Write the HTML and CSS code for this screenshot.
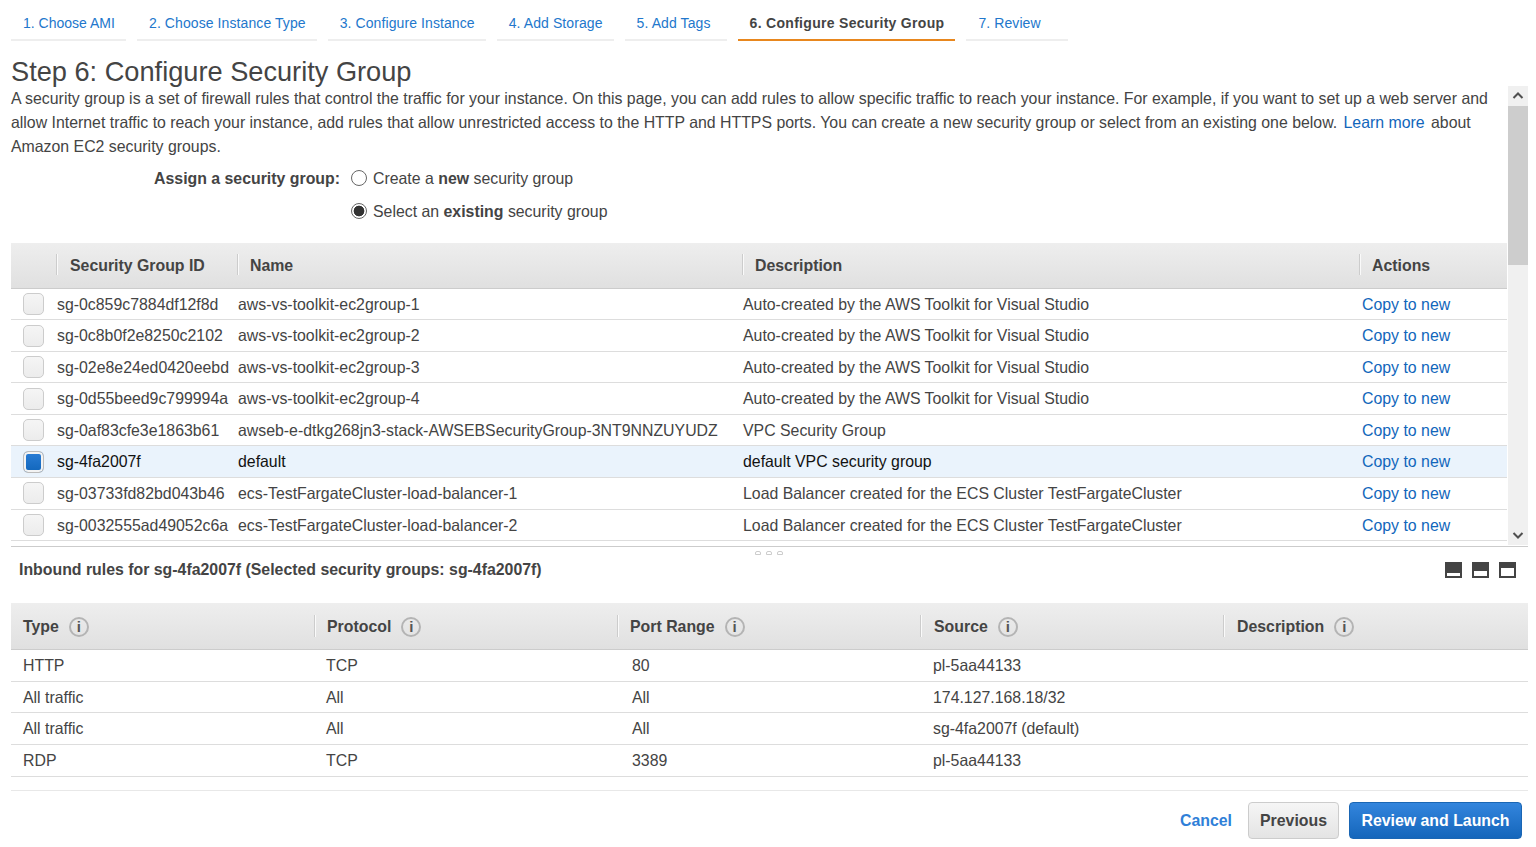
FILE: index.html
```html
<!DOCTYPE html>
<html lang="en">
<head>
<meta charset="utf-8">
<title>Step 6: Configure Security Group</title>
<link rel="stylesheet" href="styles.css">
</head>
<body>
<nav class="steps">
  <a class="step">1. Choose AMI</a>
  <a class="step">2. Choose Instance Type</a>
  <a class="step">3. Configure Instance</a>
  <a class="step">4. Add Storage</a>
  <a class="step">5. Add Tags</a>
  <a class="step active">6. Configure Security Group</a>
  <a class="step">7. Review</a>
</nav>
<h1 class="title">Step 6: Configure Security Group</h1>
<section class="pane">
  <div class="pane-content">
    <p class="intro">A security group is a set of firewall rules that control the traffic for your instance. On this page, you can add rules to allow specific traffic to reach your instance. For example, if you want to set up a web server and allow Internet traffic to reach your instance, add rules that allow unrestricted access to the HTTP and HTTPS ports. You can create a new security group or select from an existing one below. <a class="link learn">Learn more</a> about Amazon EC2 security groups.</p>
    <div class="assign">
      <div class="assign-label">Assign a security group:</div>
      <div class="assign-options">
        <label class="option"><span class="radio"></span><span>Create a <b>new</b> security group</span></label>
        <label class="option"><span class="radio on"></span><span>Select an <b>existing</b> security group</span></label>
      </div>
    </div>
    <div class="sg-table">
      <div class="sg-row sg-head">
        <div class="hcell"></div><div class="hcell sep">Security Group ID</div><div class="hcell sep">Name</div><div class="hcell sep">Description</div><div class="hcell sep">Actions</div>
      </div>
      <div class="sg-row"><div class="check-cell"><span class="check"></span></div><div>sg-0c859c7884df12f8d</div><div>aws-vs-toolkit-ec2group-1</div><div>Auto-created by the AWS Toolkit for Visual Studio</div><div><a class="link copy">Copy to new</a></div></div>
      <div class="sg-row"><div class="check-cell"><span class="check"></span></div><div>sg-0c8b0f2e8250c2102</div><div>aws-vs-toolkit-ec2group-2</div><div>Auto-created by the AWS Toolkit for Visual Studio</div><div><a class="link copy">Copy to new</a></div></div>
      <div class="sg-row"><div class="check-cell"><span class="check"></span></div><div>sg-02e8e24ed0420eebd</div><div>aws-vs-toolkit-ec2group-3</div><div>Auto-created by the AWS Toolkit for Visual Studio</div><div><a class="link copy">Copy to new</a></div></div>
      <div class="sg-row"><div class="check-cell"><span class="check"></span></div><div>sg-0d55beed9c799994a</div><div>aws-vs-toolkit-ec2group-4</div><div>Auto-created by the AWS Toolkit for Visual Studio</div><div><a class="link copy">Copy to new</a></div></div>
      <div class="sg-row"><div class="check-cell"><span class="check"></span></div><div>sg-0af83cfe3e1863b61</div><div>awseb-e-dtkg268jn3-stack-AWSEBSecurityGroup-3NT9NNZUYUDZ</div><div>VPC Security Group</div><div><a class="link copy">Copy to new</a></div></div>
      <div class="sg-row selected"><div class="check-cell"><span class="check on"></span></div><div>sg-4fa2007f</div><div>default</div><div>default VPC security group</div><div><a class="link copy">Copy to new</a></div></div>
      <div class="sg-row"><div class="check-cell"><span class="check"></span></div><div>sg-03733fd82bd043b46</div><div>ecs-TestFargateCluster-load-balancer-1</div><div>Load Balancer created for the ECS Cluster TestFargateCluster</div><div><a class="link copy">Copy to new</a></div></div>
      <div class="sg-row"><div class="check-cell"><span class="check"></span></div><div>sg-0032555ad49052c6a</div><div>ecs-TestFargateCluster-load-balancer-2</div><div>Load Balancer created for the ECS Cluster TestFargateCluster</div><div><a class="link copy">Copy to new</a></div></div>
    </div>
  </div>
  <div class="scrollbar">
    <svg class="arrow" width="20" height="20" viewBox="0 0 20 20"><path d="M5.5 12 10 7.5 14.5 12" fill="none" stroke="#505050" stroke-width="2"/></svg>
    <div class="thumb"></div>
    <div class="track"></div>
    <svg class="arrow" width="20" height="20" viewBox="0 0 20 20"><path d="M5.5 8 10 12.5 14.5 8" fill="none" stroke="#505050" stroke-width="2"/></svg>
  </div>
</section>
<section class="detail">
  <div class="grip"><i></i><i></i><i></i></div>
  <div class="detail-head">
    <div class="detail-title">Inbound rules for sg-4fa2007f (Selected security groups: sg-4fa2007f)</div>
    <div class="sizers">
      <span class="sizer s1"></span><span class="sizer s2"></span><span class="sizer s3"></span>
    </div>
  </div>
  <div class="rules">
    <div class="r-row r-head">
      <div class="rhcell first">Type <span class="info">i</span></div>
      <div class="rhcell">Protocol <span class="info">i</span></div>
      <div class="rhcell">Port Range <span class="info">i</span></div>
      <div class="rhcell wide">Source <span class="info">i</span></div>
      <div class="rhcell wide">Description <span class="info">i</span></div>
    </div>
    <div class="r-row"><div>HTTP</div><div>TCP</div><div class="port">80</div><div>pl-5aa44133</div><div></div></div>
    <div class="r-row"><div>All traffic</div><div>All</div><div class="port">All</div><div>174.127.168.18/32</div><div></div></div>
    <div class="r-row"><div>All traffic</div><div>All</div><div class="port">All</div><div>sg-4fa2007f (default)</div><div></div></div>
    <div class="r-row"><div>RDP</div><div>TCP</div><div class="port">3389</div><div>pl-5aa44133</div><div></div></div>
  </div>
</section>
<footer class="footer">
  <a class="cancel">Cancel</a>
  <button class="btn prev">Previous</button>
  <button class="btn primary">Review and Launch</button>
</footer>
</body>
</html>
```
FILE: styles.css
```css
* { box-sizing: border-box; }
html, body { margin: 0; height: 100%; overflow: hidden; background: #fff; }
body { padding-left: 11px; width: 1536px; height: 847px; font: 15.86px/24px "Liberation Sans", Arial, sans-serif; color: #444; }
a { text-decoration: none; }
.link { color: #1166bb; }

.steps { display: flex; gap: 11px; height: 41px; }
.step { padding: 0 11px 0 12px; min-width: 102px; height: 41px; line-height: 46px; font-size: 14px; letter-spacing: .09px; color: #2277cc; border-bottom: 2px solid #eeeeee; white-space: nowrap; }
.step:first-child { width: 115px; letter-spacing: 0; }
.step.active { color: #444; font-weight: bold; letter-spacing: .3px; border-bottom-color: #e8871e; }

.title { margin: 16px 0 0; height: 29px; font-size: 27.2px; line-height: 30px; font-weight: normal; color: #444; }

.pane { display: flex; height: 460px; }
.pane-content { width: 1497px; }
.intro { margin: 0; height: 72px; width: 1490px; padding-top: 1px; }
.learn { margin: 0 2px; }
.assign { display: flex; height: 85px; }
.assign-label { width: 329px; padding-top: 9px; text-align: right; font-weight: bold; }
.assign-options { padding-left: 11px; padding-top: 9px; }
.option { display: flex; align-items: center; gap: 6px; height: 24px; margin-bottom: 9px; }
.radio { width: 16px; height: 16px; border: 1px solid #666; border-radius: 50%; margin-top: -3px; background: #fff; }
.radio.on { background: radial-gradient(circle, #333 0 5px, #fff 5.7px); }

.sg-table { width: 1496px; }
.sg-row { display: grid; grid-template-columns: 46px 181px 505px 617px 147px; height: 31.55px; line-height: 31px; border-bottom: 1px solid #ddd; white-space: nowrap; }
.sg-head { height: 45.7px; line-height: 45px; background: linear-gradient(#eeeeee, #e0e0e0); border-bottom: 1px solid #ccc; font-weight: bold; }
.hcell { position: relative; padding-left: 12px; }
.hcell:nth-child(2) { padding-left: 13px; }
.hcell.sep::before { content: ""; position: absolute; left: 0; top: 11px; height: 21px; border-left: 1px solid #fafafa; box-shadow: -1px 0 0 #ccc; }
.check-cell { display: flex; align-items: center; padding-left: 12px; }
.check { width: 21px; height: 22px; border: 1px solid #ccc; border-radius: 5px; background: linear-gradient(#f5f5f5, #ececec); display: block; }
.check.on { background: linear-gradient(#2a7dd6, #1166bb); box-shadow: inset 0 0 0 2px #f3f3f3; border-color: #bbb; }
.selected { background: #eaf3fc; color: #111; }
.copy { padding-left: 2px; }

.scrollbar { width: 20px; display: flex; flex-direction: column; background: #f0f0f0; height: 459px; }
.arrow { display: block; flex: none; }
.thumb { height: 159px; background: #cdcdcd; flex: none; }
.track { flex: 1; }

.detail { position: relative; margin-right: 8px; }
.grip { position: absolute; left: 744px; top: 5px; display: flex; gap: 5px; }
.grip i { width: 6px; height: 4px; border: 1px solid #ccc; border-radius: 2px 2px 0 0; }
.detail::before { content: ""; position: absolute; left: 0; right: 0; top: 0; border-top: 1px solid #ccc; }
.detail-head { display: flex; justify-content: space-between; height: 57px; padding: 12px 12px 0 8px; }
.detail-title { font-weight: bold; }
.sizers { display: flex; gap: 10px; padding-top: 4px; height: 20px; }
.sizer { position: relative; width: 17px; height: 16px; background: #444; }
.sizer::after { content: ""; position: absolute; left: 2px; right: 2px; bottom: 2px; background: #fff; }
.s1::after { height: 3px; }
.s2::after { height: 5px; }
.s3::after { height: 8px; }

.rules { width: 1517px; }
.r-row { display: grid; grid-template-columns: 303px 303px 304px 302px 305px; height: 31.7px; line-height: 31px; border-bottom: 1px solid #ddd; padding-left: 12px; }
.port { padding-left: 3px; }
.r-head { height: 47px; line-height: 46px; background: linear-gradient(#eeeeee, #e0e0e0); border-bottom: 1px solid #ccc; font-weight: bold; padding-left: 0; grid-template-columns: 304px 303px 303px 303px 304px; }
.rhcell { position: relative; padding: 1px 0 0 12px; display: flex; align-items: center; gap: 10px; }
.rhcell.wide { padding-left: 13px; }
.rhcell:not(.first)::before { content: ""; position: absolute; left: 0; top: 12px; height: 22px; border-left: 1px solid #fafafa; box-shadow: -1px 0 0 #ccc; }
.info { width: 20px; height: 20px; border: 2px solid #b4b4b4; border-radius: 50%; font: bold 15px/16px "Liberation Sans", sans-serif; text-align: center; color: #555; }

.footer { display: flex; justify-content: flex-end; align-items: center; gap: 16px; width: 1517px; height: 49px; margin-top: 13px; border-top: 1px solid #e8e8e8; padding: 11px 6px 0 0; font-weight: bold; }
.cancel { color: #2f80d8; padding-top: 2px; }
.btn { height: 37px; border-radius: 4px; font: bold 15.86px "Liberation Sans", Arial, sans-serif; padding: 2px 0 0; white-space: nowrap; }
.prev { width: 91px; color: #444; border: 1px solid #ccc; background: linear-gradient(#f5f5f5, #e4e4e4); }
.primary { width: 173px; margin-left: -6px; color: #fff; border: 1px solid #1a66b4; background: linear-gradient(#3385dd, #1566bb); }
```
